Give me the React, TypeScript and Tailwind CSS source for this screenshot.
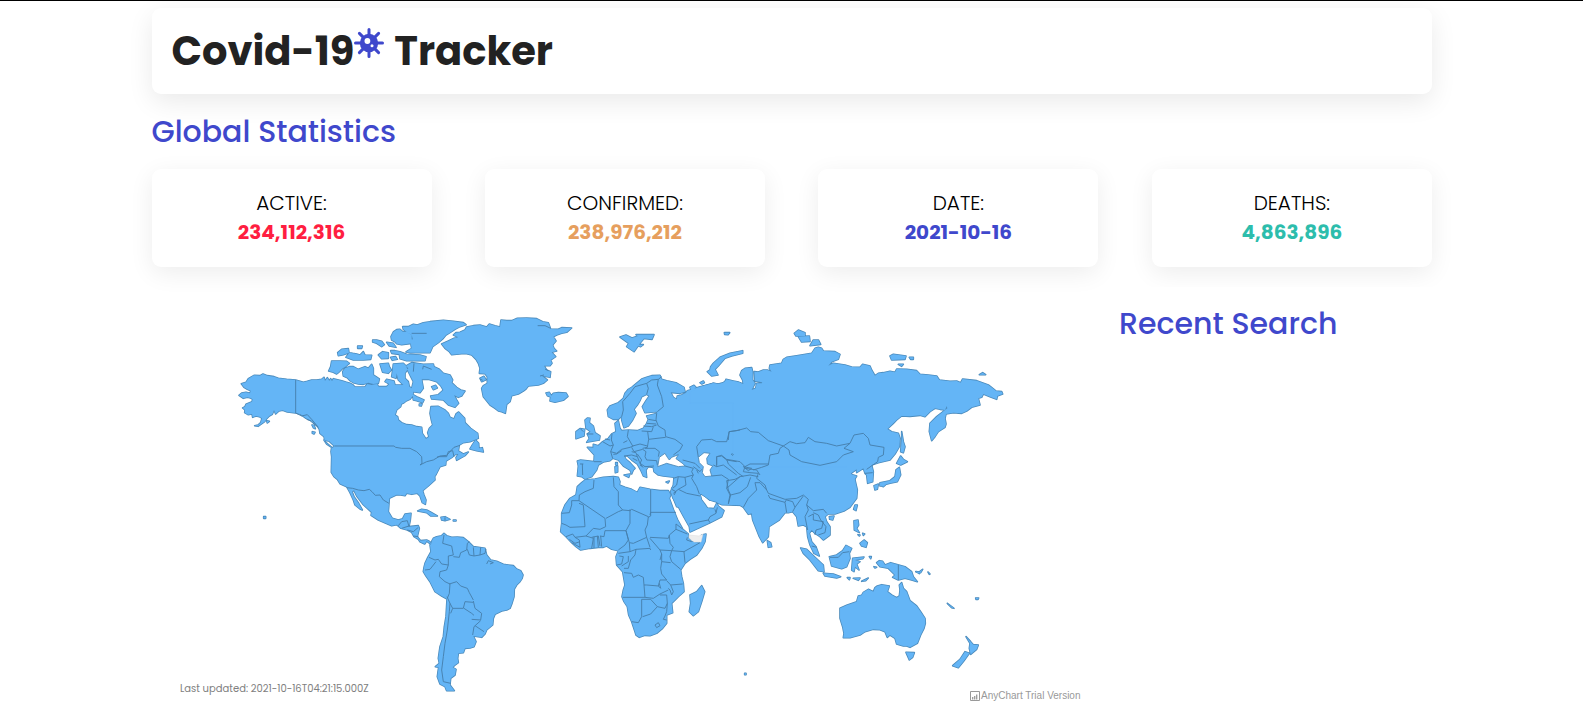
import React from "react";

type Region = { x: number; y: number; land: string; borders?: string; water?: string };

const regions: Region[] = [
  {
    // North America and the Arctic archipelago
    x: 230,
    y: 310,
    land:
      "M197,210 170,208 145,205 132,200 112,197 99,192 90,197 72,196 55,206 48,217 34,221 42,232 52,238 62,242 60,250 48,247 35,249 27,256 40,265 52,262 62,264 68,268 66,275 48,283 45,290 38,294 45,300 44,308 54,314 66,312 68,322 78,318 88,320 96,325 92,338 84,345 74,347 84,349 104,335 110,326 118,318 127,313 132,300 137,312 147,303 158,301 172,306 197,309 212,313 228,325 245,332 262,348 268,358 270,370 282,380 285,395 305,412 303,425 305,440 304,487 312,500 322,508 330,521 350,530 360,548 370,570 375,585 390,597 397,600 386,580 372,560 366,545 372,541 380,558 400,584 425,607 423,616 445,630 485,647 500,644 513,655 532,660 545,667 552,680 565,688 570,695 584,702 590,693 603,703 600,695 590,690 572,692 562,680 568,655 565,647 537,650 541,630 543,610 525,612 518,626 505,630 487,625 475,605 477,580 478,565 500,554 512,555 525,557 530,550 545,553 562,550 570,558 577,578 586,583 588,570 582,555 578,542 595,528 615,510 614,500 619,492 630,470 647,465 648,453 665,443 678,432 685,432 678,443 680,451 705,437 715,426 700,432 685,423 688,405 700,398 720,395 740,387 745,385 743,370 722,355 705,338 704,325 686,306 678,312 672,327 660,322 655,310 645,300 625,289 603,290 600,310 604,330 608,345 598,355 593,368 597,380 588,387 577,370 575,352 560,350 545,345 530,344 515,338 505,330 503,320 495,315 500,300 512,290 514,282 522,278 530,272 540,268 548,258 550,245 570,248 580,235 575,208 545,205 550,215 545,235 538,230 535,215 525,205 525,190 535,175 520,160 512,175 500,190 505,210 520,225 495,225 492,213 470,208 465,215 478,222 470,230 446,230 440,222 425,225 412,222 405,231 375,231 368,224 360,220 347,216 335,212 310,206 306,214 302,206 298,213 292,203 285,213 282,202 275,208 260,210 245,210 232,214 220,217Z" +
      "M518,50 535,50 550,43 562,45 580,38 600,35 640,31 670,34 700,38 708,44 690,50 675,58 660,68 648,75 640,85 625,98 608,110 600,128 540,128 528,126 545,115 542,100 550,92 545,75 530,66 520,58Z" +
      "M483,80 490,66 500,59 510,58 518,65 530,66 545,76 545,88 558,90 545,100 515,104 500,101 495,95 485,90Z" +
      "M482,122 495,122 510,125 530,133 570,135 588,140 585,152 530,152 510,146 508,133 485,130Z" +
      "M428,90 440,90 455,94 463,104 455,110 440,100 428,96ZM470,97 490,100 498,112 478,108ZM383,108 397,108 395,115 383,115ZM323,128 335,118 355,116 357,128 340,134 325,137ZM348,142 358,128 368,130 380,132 390,135 400,125 405,135 425,136 422,148 400,150 370,150ZM445,135 458,125 475,128 475,145 455,146ZM482,142 497,140 502,148 487,151Z" +
      "M305,153 330,153 350,154 358,160 346,170 338,175 325,188 320,192 310,187 296,183 302,170ZM345,175 358,170 370,170 385,178 405,170 415,175 425,163 430,175 430,195 438,200 448,207 445,220 430,222 415,218 400,223 385,222 370,218 360,212 352,203 340,198 338,185ZM450,162 475,160 478,170 484,180 475,190 458,187ZM490,162 520,160 512,175 500,190 498,205 485,200 488,180Z" +
      "M528,168 545,158 580,163 610,162 612,170 628,178 640,190 660,195 668,210 665,218 680,232 692,240 705,243 695,258 685,262 672,255 680,270 686,280 675,292 655,285 640,270 605,267 602,258 625,254 640,240 632,227 620,215 595,208 575,208 545,205 535,185Z" +
      "M605,230 617,226 622,234 610,239ZM548,253 560,260 582,270 578,278 560,272 550,270ZM568,282 576,282 574,288 568,287ZM282,390 298,394 313,408 308,414 290,402ZM247,365 255,367 252,372 247,370ZM246,345 252,346 256,356 250,353ZM110,332 118,334 112,339Z",
    borders:
      "M197,210V309M197,309 215,318 232,314 245,328 265,352M313,408H492L497,412 515,415 540,415 560,425 575,440 576,460 570,465 590,455 610,450 630,438 650,436 672,412 690,406M622,440 650,440 655,425 668,422 672,440M350,533 368,535 385,540 402,542 418,538 426,545 436,556 450,555 460,570 477,580M578,178 580,168 605,178M552,160 550,185M545,70 590,70M230,328 240,332 262,350",
  },
  {
    // Greenland, Newfoundland, Iceland
    x: 430,
    y: 305,
    land:
      "M35,117 55,108 72,100 85,97 70,90 78,83 90,82 105,75 110,66 130,62 150,60 170,66 178,57 195,62 210,66 213,45 230,47 245,47 262,40 290,39 320,41 338,50 355,53 362,72 385,73 395,68 425,69 410,82 395,85 380,90 370,95 378,108 368,120 372,130 380,138 365,142 377,155 362,165 366,175 360,182 342,182 350,195 362,200 360,217 335,212 352,225 340,235 325,240 295,243 288,252 280,258 265,267 245,272 240,290 230,298 226,325 215,320 205,318 195,310 180,300 168,285 160,275 155,250 160,242 172,235 172,215 165,206 148,205 150,190 145,175 138,163 125,150 110,146 95,146 65,149 58,140 45,130Z" +
      "M348,264 358,262 364,272 370,265 385,263 408,264 414,274 400,286 375,292 360,288 362,276 352,272ZM137,405 128,418 120,432 140,437 160,441 157,428 147,430 146,415ZM150,220 162,214 168,224 155,230Z",
    borders: "M323,62H345L362,70M330,213 342,210M345,192 355,197M150,222 158,226",
  },
  {
    // South America and the Caribbean
    x: 330,
    y: 430,
    land:
      "M303,343 306,332 310,325 320,320 335,317 342,310 350,317 365,322 382,321 400,323 415,335 430,350 445,352 465,355 470,375 482,390 500,394 520,403 550,407 560,417 572,422 579,435 576,446 570,455 560,465 553,477 552,500 546,520 540,535 530,540 515,543 495,553 490,565 488,585 470,600 465,612 455,622 430,618 438,635 432,650 420,654 405,655 400,668 385,670 383,685 385,698 375,705 368,712 378,718 375,735 362,745 360,765 373,782 350,782 345,770 330,762 322,740 324,725 326,712 316,710 328,700 325,685 330,650 340,620 343,590 348,560 351,507 335,498 315,485 300,455 288,438 280,425 282,412 285,400 293,383 303,365 300,345Z" +
      "M263,243 275,238 290,240 300,245 322,258 302,258 290,248ZM333,262 345,260 360,268 345,272 335,270ZM370,270 378,270 378,273 370,273Z",
    borders:
      "M351,500 360,520 358,545 352,600 345,640 340,680 335,720 340,755 362,760M297,382 315,390 325,388 335,402 355,405 350,420 330,425 328,440 345,455 360,462 358,490 352,505M285,420 300,418 318,395M342,315 338,340 365,348 370,375 355,378 355,405M370,380 388,382 392,368 410,360 412,340 418,335M412,358 418,375 432,378 430,352M432,378 450,375 465,370 468,357M450,375 452,352M358,462 380,455 392,468 412,475 418,488 430,510M430,517 405,515 400,535 368,535 360,520M430,513 435,535 455,550 452,570 425,568M432,556 425,550 402,535M368,535 362,550M452,572 432,590 428,615M435,587 462,605M205,287 215,275 232,272 237,290M215,295 240,287M232,300 250,305 265,292M250,318 265,320M470,402 475,392 490,398 480,402M345,262 345,272",
  },
  {
    // Europe and the Middle East
    x: 550,
    y: 360,
    land:
      "M172,150 180,138 205,128 220,115 225,100 235,88 245,82 262,68 275,57 290,52 305,47 330,46 335,58 350,62 378,68 402,82 405,95 390,100 362,97 370,112 380,118 382,108 395,105 408,98 412,92 430,87 450,80 475,75 490,70 515,75 528,60 570,68 580,90 580,436 515,434 500,426 480,420 467,410 455,402 450,402 455,425 470,445 470,470 430,450 380,440 368,410 362,395 370,375 372,352 360,350 340,348 325,345 312,335 310,322 295,320 288,330 290,352 280,348 272,330 262,312 245,300 232,288 222,288 228,298 240,308 255,325 250,330 245,342 240,330 220,318 205,300 188,295 180,302 160,306 145,315 140,330 125,350 105,357 95,350 82,348 85,318 82,303 92,300 132,305 133,285 112,262 130,263 130,253 145,257 158,245 175,235 185,222 198,215 195,190 205,182 210,205 215,212 235,210 262,212 280,205 290,190 295,178 290,168 322,160 320,155 285,158 277,140 288,122 298,108 290,103 275,110 270,122 262,135 252,148 258,160 248,180 235,198 222,203 215,180 215,168 205,178 190,178 175,170Z" +
      "M105,180 112,174 120,175 118,188 130,198 135,218 150,228 148,240 110,247 118,235 112,222 122,215 108,205ZM78,215 90,206 104,208 102,228 78,236ZM222,345 240,342 236,352ZM195,320 203,318 203,336 196,338ZM197,308 202,308 202,316 197,314ZM348,366 358,363 354,369ZM420,82 432,76 438,82 425,92ZM450,68 460,63 463,68 455,72Z",
    water:
      "M323,320 328,292 345,280 352,292 358,300 365,292 385,284 378,296 400,312 405,318 385,320 350,310ZM445,292 462,278 480,280 470,295 472,312 488,318 480,330 485,348 465,350 457,338 460,320 448,308Z",
    borders:
      "M215,170 220,150 218,125 240,100 255,80 290,70M290,103 295,85 290,70 305,60 325,58 335,50M325,58 322,75 335,110 340,140 322,155M320,160 318,180 325,198 345,210 347,230 375,238 398,255 390,270 370,285M295,178 318,182M280,198 305,200 320,195M290,190 318,192M275,213 305,215 310,200M293,215 296,238 347,232M296,238 292,262 278,265M235,210 232,230 248,258 270,252 292,258M186,222 184,240 190,255 182,275 200,280 215,268 240,262 250,258M220,248 232,242M158,245 180,258 190,255M182,275 188,295M215,272 200,282 190,283M222,288 245,285 262,290 268,305 275,318M245,262 252,275 278,268 288,275 285,290 290,300 320,302 322,315M285,265 315,265 328,275 325,290M262,290 258,278 245,275M262,282 275,300 270,310 285,320 312,318M248,295 262,302M270,315 280,322M132,305 155,305M97,312 98,345M100,312H90M405,318 430,325 425,335 430,345 405,352 385,350 370,355M398,300 435,310 450,325M430,320 450,335 455,328M385,350 380,375 368,385M405,352 408,375 385,388 370,400M430,345 425,355 440,380 448,402M385,388 410,400 450,408M445,292 440,260 455,240 485,238 500,245 530,245 538,215 570,210M500,320V290L515,288 530,300 560,305M490,315 500,320 520,315 540,330 560,345M485,348 515,345 535,358 530,385 540,405 535,430M530,385 570,350M365,388 378,395 372,405M92,207 100,215M110,222H130M165,237 180,240",
  },
  {
    // Africa
    x: 550,
    y: 460,
    land:
      "M105,60 135,57 160,52 190,50 205,52 210,65 208,75 225,82 245,88 262,97 270,82 300,88 330,92 355,92 362,105 358,115 370,148 382,178 398,207 415,222 414,232 425,245 450,248 455,225 468,222 465,245 455,265 440,285 420,298 405,310 392,330 395,350 400,370 402,395 385,410 365,430 368,458 350,465 350,490 338,505 320,520 300,527 285,526 268,532 258,525 255,515 245,485 236,465 232,440 222,425 216,410 220,390 225,375 218,335 200,315 198,290 205,272 185,268 170,258 160,262 145,262 120,265 92,270 78,260 65,248 48,230 32,215 35,190 35,160 45,135 60,115 78,105 82,80 95,68ZM420,405 440,395 455,377 464,395 455,425 445,455 430,467 418,455 422,430Z",
    borders:
      "M132,60 130,85 105,95 88,105 87,122 165,175 167,200 150,208 130,205 108,228 75,232 68,222 48,230M87,122H65V135L58,158 35,160M87,130 100,135 105,200 60,202 48,195 35,190M190,52 192,80 205,95 205,135 218,150 205,155 168,175M240,148 240,190 228,212 195,212 165,212 162,230 150,228M218,150 240,152 245,148 295,170 292,195 285,210 290,232 250,250 238,248 228,212M302,88V168M302,157H378M302,168 295,172M302,157 300,165M228,212 235,240 225,255 205,270M238,248 240,275 205,280M240,275 258,268 300,265 302,270M290,232 300,262M300,232 355,235 358,225 378,208 378,192 398,207M358,225 360,250 370,262 365,272 330,270 300,235M378,208 412,222M412,232 410,240 425,245M365,272 402,275 450,248M402,275 405,308M365,272 360,290 365,305 392,328M330,270 335,282 335,305 362,308M335,305 332,325 335,342 350,360 330,360 325,378 290,375 282,375 280,352 265,345 250,352 245,340 222,338M200,315 215,312 220,290 208,288M222,325 235,325 242,300 255,285 258,268M235,288 235,305 215,318M335,282 330,300M350,362 362,375 398,372M362,375 370,395 365,405 360,390 355,385M325,378 332,385 328,370M282,375 285,412 310,415 330,402 355,390M285,412 218,412M275,418 275,470 265,488 245,485M275,418 302,418 322,440 302,462 278,470M322,440 345,445 352,430 350,405 330,405M352,430 350,455 345,468M345,468 340,478 350,480M315,495 325,488 330,497 320,503ZM108,228 130,235 125,265M88,240 90,262 65,248M88,240 75,232M125,232 145,228 150,258M132,230 132,264M142,228 145,262M152,228 155,260M58,238 75,250 90,245",
  },
  {
    // Russia and north-east Asia
    x: 690,
    y: 320,
    land:
      "M0,215 15,210 40,198 70,190 85,192 110,185 108,178 130,183 142,185 160,192 158,180 150,165 155,152 165,145 185,143 188,155 188,180 195,190 185,210 197,205 200,190 215,190 217,187 195,183 193,155 205,156 220,150 232,150 245,155 238,145 240,135 275,130 280,118 290,112 320,107 365,100 375,85 385,82 395,85 400,93 435,95 450,103 445,118 425,125 415,137 430,130 465,135 485,141 510,142 518,133 540,138 545,150 555,167 565,160 580,158 600,154 615,157 620,147 650,148 680,152 690,163 715,165 740,168 748,180 780,184 800,183 812,188 818,177 860,182 895,195 912,208 918,213 935,215 938,222 922,228 920,238 900,230 880,222 875,232 865,235 870,255 845,262 830,273 815,280 790,278 768,282 765,295 768,312 765,322 745,335 735,350 725,362 718,335 720,310 740,290 772,265 770,258 765,270 750,268 735,265 720,275 705,290 690,286 660,289 635,288 620,300 610,310 592,327 605,335 625,340 630,355 628,380 615,402 600,420 565,428 545,435 550,455 548,485 533,490 530,465 525,460 520,445 500,458 500,448 480,462 500,468 490,485 500,510 200,520 130,500 130,250 0,250Z" +
      "M52,155 60,150 62,140 70,130 90,112 120,100 158,92 158,100 125,108 105,115 85,138 75,148 84,165 65,168ZM103,38 119,38 114,44 104,43ZM313,40 325,30 345,38 345,48 318,48ZM325,50 358,48 360,64 335,66ZM360,77 370,60 385,60 392,73ZM600,108 610,103 648,108 645,118 605,120ZM658,112 670,112 670,118 662,118ZM625,133 640,133 635,139ZM868,164 878,158 887,164Z" +
      "M635,335 640,365 645,380 640,398 632,395 635,360ZM620,430 632,408 640,418 652,425 632,435ZM628,442 632,465 622,485 600,490 570,498 570,488 600,482 615,470 618,450ZM552,497 565,492 562,508 555,510ZM570,496 588,493 580,500Z",
    borders:
      "M115,360 117,335 140,332 170,324 182,335 205,337 235,362 280,378 300,365 320,371 345,368 355,352 375,365 410,370 440,378 480,370 492,345 520,340 535,355 540,375 582,382 580,405 565,412 563,425 530,448M480,370 462,385 490,395 460,405 440,425 390,436 335,425 300,405 297,390 280,378 270,385 265,400 240,405 235,435 215,442 190,450M80,435V410L95,406 110,418 150,425 165,440 180,432 235,432M165,440 160,455 180,458 205,460 200,475 225,495 230,510M110,418 115,432 145,460 160,470M124,403 127,401 130,404 127,406ZM525,460 548,458M160,440 185,445 175,452Z",
  },
  {
    // South and south-east Asia
    x: 660,
    y: 420,
    land:
      "M100,165 150,160 220,140 560,140 585,180 592,210 590,235 570,262 552,273 525,282 505,282 495,290 500,305 510,320 510,345 490,360 480,350 465,340 455,330 448,340 455,365 468,380 478,408 462,400 450,375 443,350 440,320 430,315 415,318 410,290 398,275 385,278 375,278 358,300 327,320 325,350 308,368 298,350 290,330 278,300 275,280 265,283 250,262 240,255 205,252 175,250 168,242 150,240 137,230 120,218 100,200ZM38,232 35,205 60,195 100,200 118,220 123,238 134,252 142,264 162,266 170,250 175,258 192,272 185,290 150,308 90,336 88,320 71,290 56,262Z" +
      "M322,362 332,368 335,380 325,382ZM508,290 522,288 518,300 509,298ZM585,255 592,255 588,272 581,268ZM582,302 594,300 596,315 590,325 598,338 583,330ZM600,370 612,360 622,368 618,382 605,378ZM594,344 600,345 598,348ZM608,340 614,342 610,346ZM422,384 440,388 465,412 490,435 492,455 475,452 450,420 430,400ZM490,460 520,462 542,470 530,474 495,468ZM508,410 530,405 548,392 558,376 575,385 568,400 570,415 560,440 545,446 515,438ZM578,415 612,411 608,416 585,420 600,425 590,432 597,450 585,440 582,455 575,450Z" +
      "M650,428 658,422 668,424 675,435 692,428 735,440 755,455 760,470 772,485 755,480 735,475 715,480 698,472 705,465 685,445 660,440ZM562,473 570,473 568,479ZM580,475 600,474 595,481ZM605,484 625,474 617,482ZM628,410 634,410 632,416ZM642,440 650,442 645,444ZM768,455 778,457 778,461Z",
    borders:
      "M200,182 205,210 212,225 205,252M200,182 225,178 240,170 270,165 295,170M212,225 240,218 262,200 272,172M250,262 265,235 290,210 285,188 300,188 320,210 325,220 375,238 410,235 430,225 445,238 440,255 460,272 490,268 500,280M325,225 330,235 375,247 380,238M375,247 380,278M380,240 398,245 405,262 398,275M405,262 430,228M440,255 445,270 435,290 443,330M445,290 460,282 460,300 490,305 485,325 468,330 465,345M460,278 475,285 482,300 498,320 495,338 475,345M455,378 470,382M715,435V480M510,412 535,412 548,398 568,395M88,312 120,305 145,300 150,308M145,300 150,290 168,280 172,262M165,268 168,278M255,145 290,150 300,165M110,150 115,160",
  },
  {
    // Oceania
    x: 800,
    y: 540,
    land:
      "M120,205 140,196 170,185 175,168 185,166 190,157 205,148 220,155 225,143 232,138 245,134 268,138 262,155 275,165 290,173 298,168 300,150 298,135 305,128 310,145 320,155 330,182 350,198 362,215 375,235 376,250 372,265 362,285 352,310 330,322 320,318 310,318 290,312 285,295 270,285 262,292 255,275 240,269 220,268 195,275 180,285 150,293 130,293 132,280 128,260 120,235Z" +
      "M318,337 343,338 338,352 328,360ZM498,290 512,305 520,314 535,315 530,328 512,343 508,325 510,310ZM495,335 508,340 492,362 475,383 458,377 480,358ZM442,190 462,205 455,203ZM527,174 536,174 534,178 528,178ZM348,95 358,96 368,88 362,98ZM384,96 390,102 388,103Z",
  },
  {
    // Svalbard and remote islands
    x: 0,
    y: 0,
    land:
      "M1860,1011 1878,1005 1896,1014 1914,1008 1935,1012 1920,1030 1902,1055 1880,1040 1886,1030ZM1908,1004 1962,1004 1956,1018 1920,1014ZM1908,1034 1930,1034 1922,1040ZM791,1550 797,1550 797,1555 791,1555ZM2234,2020 2238,2020 2238,2024 2234,2024Z",
  },
];

function WorldMap() {
  return (
    <svg viewBox="152 287 936 433" className="block h-[433px] w-[936px]">
      <g fill="#4987b6" stroke="#4987b6" strokeWidth={4.8} strokeLinejoin="round">
        {regions.map((r) => (
          <path key={`${r.x}-${r.y}`} transform={`translate(${r.x} ${r.y}) scale(.33333)`} d={r.land} />
        ))}
      </g>
      <g fill="#64b5f6" stroke="#64b5f6" strokeWidth={0.5}>
        {regions.map((r) => (
          <path key={`${r.x}-${r.y}`} transform={`translate(${r.x} ${r.y}) scale(.33333)`} d={r.land} />
        ))}
      </g>
      <g fill="none" stroke="#467fac" strokeWidth={2.8} strokeLinejoin="round">
        {regions.map((r) => (
          <path key={`${r.x}-${r.y}`} transform={`translate(${r.x} ${r.y}) scale(.33333)`} d={r.borders ?? ""} />
        ))}
      </g>
      <g fill="#ffffff" stroke="#4987b6" strokeWidth={2.6} strokeLinejoin="round">
        {regions.map((r) => (
          <path key={`${r.x}-${r.y}`} transform={`translate(${r.x} ${r.y}) scale(.33333)`} d={r.water ?? ""} />
        ))}
      </g>
      <path d="M689 535l10 1 4-2-2 8-7 0-5-4z" fill="#eeeeee" stroke="#dddddd" strokeWidth={0.5} />
    </svg>
  );
}

function VirusIcon() {
  return (
    <svg viewBox="0 0 30 30" className="h-[30px] w-[30px] shrink-0" fill="#3f48cc" stroke="#3f48cc">
      <g strokeLinecap="round" strokeWidth={3}>
        <path d="M15 1.5V28.5M1.5 15H28.5M5.4 5.4L24.6 24.6M5.4 24.6L24.6 5.4" />
      </g>
      <circle cx="15" cy="15" r="9.2" stroke="none" />
      <circle cx="13.4" cy="13" r="2.9" fill="#fff" stroke="none" />
      <circle cx="18" cy="17.7" r="1.5" fill="#fff" stroke="none" />
    </svg>
  );
}

const stats = [
  { label: "ACTIVE:", value: "234,112,316", color: "text-[#ff1e41]" },
  { label: "CONFIRMED:", value: "238,976,212", color: "text-[#e69f5e]" },
  { label: "DATE:", value: "2021-10-16", color: "text-[#3f48cc]" },
  { label: "DEATHS:", value: "4,863,896", color: "text-[#2dbdac]" },
];

export default function App() {
  return (
    <div className="h-[720px] overflow-hidden border-t border-black bg-white font-['Poppins','Inter',sans-serif]">
      <main className="ml-[151.5px] flex w-[1280.4px] flex-col pt-[7px]">
        <header className="flex h-[86px] items-center rounded-[9px] bg-white pl-5 shadow-[0_8px_26px_rgba(0,0,0,0.085)]">
          <h1 className="flex items-start whitespace-nowrap text-[40px] font-bold leading-[48px] text-[#222]">
            <span>Covid-19</span>
            <span className="mt-[1px]"><VirusIcon /></span>
            <span className="ml-[10px]">Tracker</span>
          </h1>
        </header>
        <h2 className="mt-[15px] h-[60px] whitespace-nowrap text-[30px] font-medium leading-[46px] text-[#3f48cc]">
          Global Statistics
        </h2>
        <section className="flex justify-between">
          {stats.map((s) => (
            <article
              key={s.label}
              className="flex h-[98px] w-[280px] flex-col items-center rounded-[9px] bg-white pt-[20px] shadow-[0_6px_24px_rgba(0,0,0,0.075)]"
            >
              <span className="text-[20px] font-light leading-[29px] text-black">{s.label}</span>
              <span className={`text-[20px] font-bold leading-[29px] ${s.color}`}>{s.value}</span>
            </article>
          ))}
        </section>
        <section className="mt-5 flex pl-[0.5px]">
          <div className="relative w-[936px]">
            <WorldMap />
            <p className="absolute left-7 top-[394px] whitespace-nowrap text-[10px] leading-4 text-[#808080]">
              Last updated: 2021-10-16T04:21:15.000Z
            </p>
            <div className="absolute left-[818px] top-[402px] flex items-center gap-[1px] whitespace-nowrap font-['Liberation_Sans',sans-serif] text-[10px] leading-[14px] text-[#999]">
              <svg viewBox="0 0 10 10" className="h-[10px] w-[10px]" fill="none" stroke="#999">
                <path d="M.5.5h9v9h-9z" />
                <path d="M2.7 8.5V6M4.7 8.5V5M6.7 8.5V3.5" strokeWidth={1.3} />
              </svg>
              <span>AnyChart Trial Version</span>
            </div>
          </div>
          <aside className="relative ml-[31px] flex-1 bg-white">
            <h2 className="whitespace-nowrap pt-[14px] text-[30px] font-medium leading-[46px] text-[#3f48cc]">Recent Search</h2>
          </aside>
        </section>
      </main>
    </div>
  );
}
